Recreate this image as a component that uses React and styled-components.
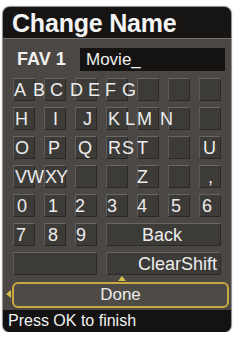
import React from 'react'
import styled, { createGlobalStyle } from 'styled-components'

const GlobalStyle = createGlobalStyle`
  html, body {
    margin: 0;
    padding: 0;
    background: #ffffff;
  }
  body {
    font-family: "Liberation Sans", Arial, sans-serif;
  }
`

const Panel = styled.div`
  margin: 7px 0 0 3px;
  width: 228px;
  height: 325px;
  border-radius: 7px;
  overflow: hidden;
  background: #4a4744;
  display: flex;
  flex-direction: column;
  box-shadow: 0 0 1px 1px #8a8885;
`

const TitleBar = styled.div`
  height: 31px;
  background: #161514;
  color: #f4f4f4;
  font-weight: bold;
  font-size: 25px;
  line-height: 33px;
  padding-left: 9px;
  border-bottom: 1px solid #77746f;
  letter-spacing: -0.2px;
`

const Body = styled.div`
  flex: 1;
  display: flex;
  flex-direction: column;
  padding: 9px 0 0 10px;
`

const NameRow = styled.div`
  display: flex;
  align-items: center;
  height: 23px;
`

const FavLabel = styled.div`
  width: 63px;
  padding-left: 4px;
  font-weight: bold;
  font-size: 18px;
  color: #f0f0f0;
  line-height: 23px;
`

const NameInput = styled.div`
  width: 139px;
  height: 23px;
  padding-left: 6px;
  background: #141312;
  color: #f0f0f0;
  font-size: 17px;
  line-height: 24px;
`

const Keys = styled.div`
  margin-top: 7px;
  display: flex;
  flex-direction: column;
  gap: 6px;
`

const KeyRow = styled.div`
  position: relative;
  display: grid;
  grid-template-columns: repeat(7, 22px);
  column-gap: 9px;
  height: 23px;
`

const Key = styled.div`
  grid-column: span ${p => p.span || 1};
  background: #3d3b38;
  border-top: 1px solid #6a6763;
  border-left: 1px solid #5f5c58;
  border-right: 1px solid #2b2927;
  border-bottom: 1px solid #2b2927;
  box-sizing: border-box;
`

const Label = styled.span`
  position: absolute;
  top: 0;
  color: #ececec;
  font-size: 18px;
  line-height: 24px;
  white-space: nowrap;
  pointer-events: none;
`

const DoneWrap = styled.div`
  position: relative;
  margin: 7px 2px 0 -1px;
`

const UpMark = styled.div`
  position: absolute;
  top: -6px;
  left: 106px;
  width: 0;
  height: 0;
  border-left: 4px solid transparent;
  border-right: 4px solid transparent;
  border-bottom: 5px solid #d8bd4a;
`

const LeftMark = styled.div`
  position: absolute;
  top: 8px;
  left: -6px;
  width: 0;
  height: 0;
  border-top: 4px solid transparent;
  border-bottom: 4px solid transparent;
  border-right: 5px solid #d8bd4a;
`

const DoneButton = styled.div`
  height: 26px;
  box-sizing: border-box;
  border: 2px solid #c9a93e;
  border-radius: 6px;
  background: #4e4b46;
  color: #ececec;
  font-size: 17px;
  line-height: 22px;
  text-align: center;
`

const Footer = styled.div`
  margin-top: 2px;
  height: 22px;
  background: #141312;
  color: #f2f2f2;
  font-size: 16px;
  line-height: 22px;
  padding-left: 5px;
`

const rows = [
  {
    keys: [1, 1, 1, 1, 1, 1, 1],
    labels: [['A', 14], ['B', 33], ['C', 50], ['D', 70], ['E', 88], ['F', 105], ['G', 122]],
  },
  {
    keys: [1, 1, 1, 1, 1, 1, 1],
    labels: [['H', 15], ['I', 53], ['J', 83], ['K', 108], ['L', 125], ['M', 137], ['N', 160]],
  },
  {
    keys: [1, 1, 1, 1, 1, 1, 1],
    labels: [['O', 15], ['P', 48], ['Q', 78], ['R', 108], ['S', 122], ['T', 137], ['U', 203]],
  },
  {
    keys: [1, 1, 1, 1, 1, 1, 1],
    labels: [['V', 15], ['W', 27], ['X', 45], ['Y', 56], ['Z', 137], [',', 208]],
  },
  {
    keys: [1, 1, 1, 1, 1, 1, 1],
    labels: [['0', 17], ['1', 48], ['2', 75], ['3', 107], ['4', 137], ['5', 171], ['6', 202]],
  },
  {
    keys: [1, 1, 1, 4],
    labels: [['7', 16], ['8', 48], ['9', 76], ['Back', 142]],
  },
  {
    keys: [3, 4],
    labels: [['ClearShift', 138]],
  },
]

export default function App() {
  return (
    <>
      <GlobalStyle />
      <Panel>
        <TitleBar>Change Name</TitleBar>
        <Body>
          <NameRow>
            <FavLabel>FAV 1</FavLabel>
            <NameInput>Movie_</NameInput>
          </NameRow>
          <Keys>
            {rows.map((row, i) => (
              <KeyRow key={i}>
                {row.keys.map((span, j) => (
                  <Key key={j} span={span} />
                ))}
                {row.labels.map(([text, x]) => (
                  <Label key={text} style={{ left: x - 13 }}>{text}</Label>
                ))}
              </KeyRow>
            ))}
          </Keys>
          <DoneWrap>
            <UpMark />
            <LeftMark />
            <DoneButton>Done</DoneButton>
          </DoneWrap>
        </Body>
        <Footer>Press OK to finish</Footer>
      </Panel>
    </>
  )
}
